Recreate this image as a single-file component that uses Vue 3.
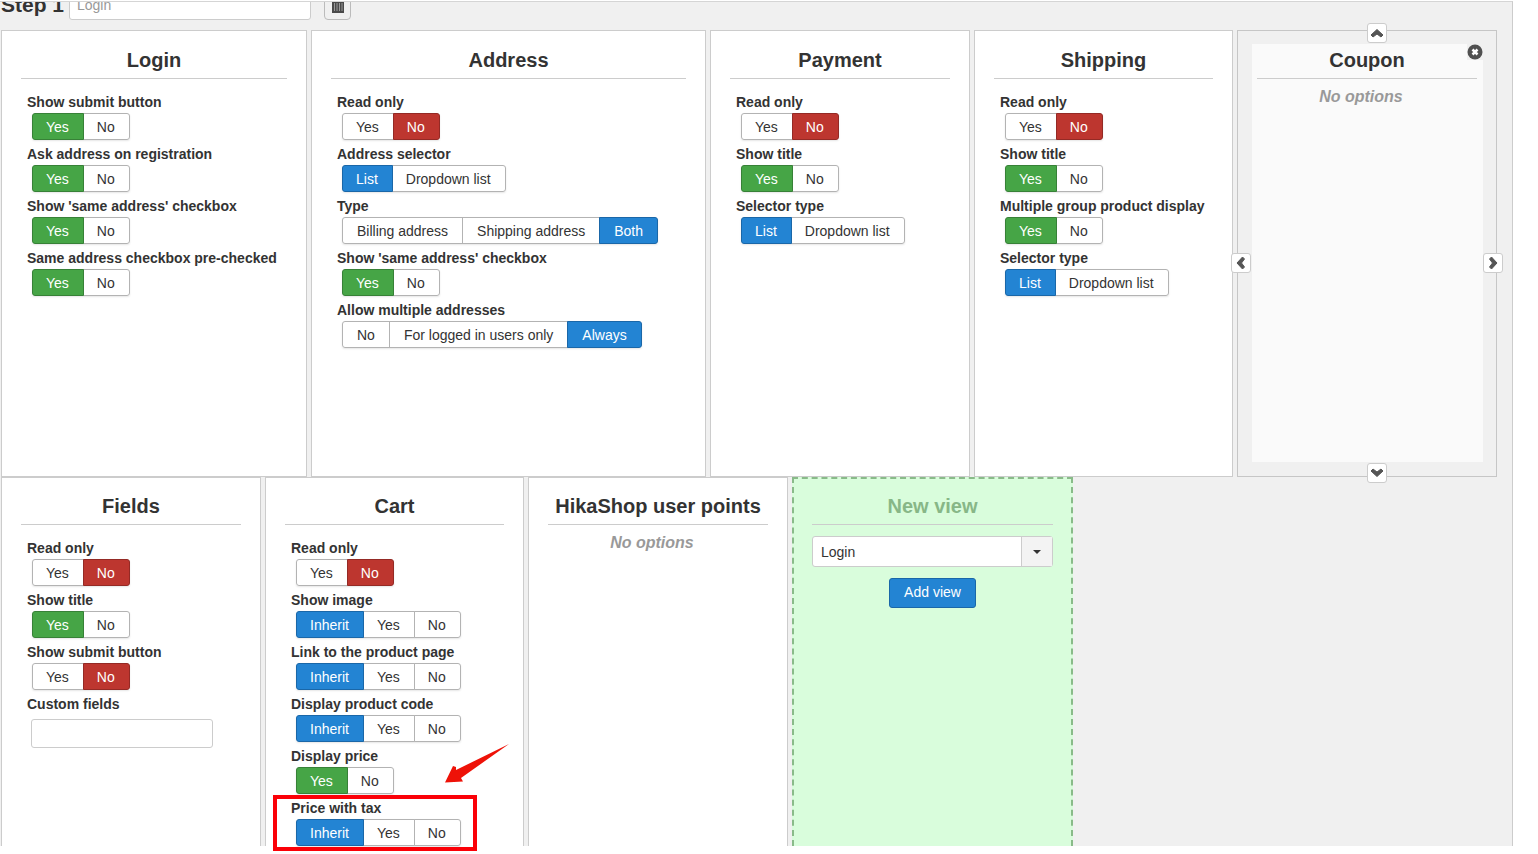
<script setup>
import { ref } from 'vue'

const yesNo = (label, value, extra = {}) => ({ label, options: ['Yes', 'No'], value: ref(value), ...extra })
const choice = (label, options, value, extra = {}) => ({ label, options, value: ref(value), neutral: true, ...extra })

const listOptions = ['List', 'Dropdown list']
const inheritOptions = ['Inherit', 'Yes', 'No']

const topViews = [
  {
    title: 'Login',
    fields: [
      yesNo('Show submit button', 'Yes'),
      yesNo('Ask address on registration', 'Yes'),
      yesNo("Show 'same address' checkbox", 'Yes'),
      yesNo('Same address checkbox pre-checked', 'Yes'),
    ],
  },
  {
    title: 'Address',
    fields: [
      yesNo('Read only', 'No'),
      choice('Address selector', listOptions, 'List'),
      choice('Type', ['Billing address', 'Shipping address', 'Both'], 'Both', { wide: true }),
      yesNo("Show 'same address' checkbox", 'Yes'),
      choice('Allow multiple addresses', ['No', 'For logged in users only', 'Always'], 'Always', { wide: true }),
    ],
  },
  {
    title: 'Payment',
    fields: [
      yesNo('Read only', 'No'),
      yesNo('Show title', 'Yes'),
      choice('Selector type', listOptions, 'List'),
    ],
  },
  {
    title: 'Shipping',
    fields: [
      yesNo('Read only', 'No'),
      yesNo('Show title', 'Yes'),
      yesNo('Multiple group product display', 'Yes'),
      choice('Selector type', listOptions, 'List'),
    ],
  },
  { title: 'Coupon', fields: [], active: true },
]

const bottomViews = [
  {
    title: 'Fields',
    fields: [
      yesNo('Read only', 'No'),
      yesNo('Show title', 'Yes'),
      yesNo('Show submit button', 'No'),
      { label: 'Custom fields', text: ref('') },
    ],
  },
  {
    title: 'Cart',
    fields: [
      yesNo('Read only', 'No'),
      choice('Show image', inheritOptions, 'Inherit'),
      choice('Link to the product page', inheritOptions, 'Inherit'),
      choice('Display product code', inheritOptions, 'Inherit'),
      yesNo('Display price', 'Yes', { arrow: true }),
      choice('Price with tax', inheritOptions, 'Inherit', { marked: true }),
    ],
  },
  { title: 'HikaShop user points', fields: [] },
]

const rows = [
  { name: 'top', views: topViews },
  { name: 'bottom', views: bottomViews, creator: true },
]

const directions = ['up', 'right', 'down', 'left']
const chevrons = {
  up: 'M8 4.500 14 10l-2 2-4-3-4 3-2-2z',
  down: 'M8 11.500 14 6l-2-2-4 3-4-3-2 2z',
  left: 'M4 8 9.500 2l2 2-3 4 3 4-2 2z',
  right: 'M12 8 6.500 2l-2 2 3 4-3 4 2 2z',
}

const stepName = ref('')
const newView = ref('Login')

function tone(field, option) {
  if (field.value.value !== option) return ''
  if (field.neutral) return 'primary'
  return option === 'Yes' ? 'success' : 'danger'
}
</script>

<template>
  <main class="page">
    <section class="board">
      <header class="step">
        <label class="step-title" for="step-name">Step 1</label>
        <input id="step-name" v-model="stepName" class="text-input step-name" type="text" placeholder="Login">
        <button class="trash" type="button" aria-label="Delete step">
          <svg viewBox="0 0 12 14" width="12" height="14" aria-hidden="true">
            <path d="M0 0h12v13H0z" fill="#4a4a4a" />
            <path d="M2.500 3v8M5 3v8M7.500 3v8M10 3v8" stroke="#999" stroke-width="1" />
          </svg>
        </button>
      </header>

      <div v-for="row in rows" :key="row.name" class="row" :class="row.name">
        <article v-for="view in row.views" :key="view.title" class="view" :class="{ active: view.active }">
          <div class="view-body">
            <h2>{{ view.title }}</h2>
            <div v-if="view.fields.length" class="fields">
              <div v-for="(field, index) in view.fields" :key="field.label" class="field" :class="{ marked: field.marked }">
                <template v-if="field.text">
                  <label class="field-label" :for="`${view.title}-${index}`">{{ field.label }}</label>
                  <input :id="`${view.title}-${index}`" v-model="field.text.value" class="text-input custom" type="text">
                </template>
                <template v-else>
                  <span :id="`${view.title}-${index}`" class="field-label">{{ field.label }}</span>
                  <div class="group" :class="{ wide: field.wide }" role="group" :aria-labelledby="`${view.title}-${index}`">
                    <button
                      v-for="option in field.options"
                      :key="option"
                      type="button"
                      :class="tone(field, option)"
                      :aria-pressed="field.value.value === option"
                      @click="field.value.value = option"
                    >{{ option }}</button>
                  </div>
                </template>
                <svg v-if="field.arrow" class="arrow" viewBox="0 0 66 42" width="66" height="42" aria-hidden="true">
                  <path d="M64 1 16 35l2 3.500L0 39.500 8 23l3 1v3z" fill="#ee1208" />
                </svg>
              </div>
            </div>
            <p v-else class="none">No options</p>
          </div>
          <template v-if="view.active">
            <button v-for="side in directions" :key="side" class="move" :class="side" type="button" :aria-label="`Move ${side}`">
              <svg viewBox="0 0 16 16" width="16" height="16" aria-hidden="true">
                <path :d="chevrons[side]" fill="#555" stroke="#555" stroke-width="1" stroke-linejoin="round" />
              </svg>
            </button>
            <button class="close" type="button" aria-label="Remove view">
              <svg viewBox="0 0 16 16" width="16" height="16" aria-hidden="true">
                <circle cx="8" cy="8" r="7.500" fill="#505050" />
                <path d="m5.500 5.500 5 5m0-5-5 5" stroke="#fff" stroke-width="2.500" />
              </svg>
            </button>
          </template>
        </article>

        <form v-if="row.creator" class="view creator" @submit.prevent>
          <h2><label for="new-view">New view</label></h2>
          <div class="select">
            <select id="new-view" v-model="newView">
              <option v-for="view in topViews" :key="view.title">{{ view.title }}</option>
            </select>
            <span class="caret" aria-hidden="true"></span>
          </div>
          <button class="add" type="submit">Add view</button>
        </form>
      </div>
    </section>
  </main>
</template>

<style>
body {
  background: #fff;
}
</style>

<style scoped>
.page,
.page * {
  box-sizing: border-box;
}

.page {
  padding: 1px 25px 8px 0;
  font-family: "Liberation Sans", Arial, sans-serif;
  font-size: 14px;
  line-height: 20px;
  color: #333;
}

button,
input,
select {
  font: inherit;
  color: inherit;
}

button {
  padding: 0;
  cursor: pointer;
}

.board {
  padding: 0 15px 0 1px;
  border-top: 1px solid #d5d5d5;
  border-right: 1px solid #ccc;
  background: #f0f0f0;
}

.step {
  display: flex;
  align-items: flex-end;
  height: 28px;
  padding-bottom: 10px;
  overflow: hidden;
}

.step-title {
  width: 68px;
  flex: none;
  padding-bottom: 1px;
  font-size: 21px;
  font-weight: bold;
  line-height: 28px;
  white-space: nowrap;
}

.text-input {
  height: 29px;
  padding: 0 7px;
  border: 1px solid #ccc;
  border-radius: 3px;
  background: #fff;
}

.step-name {
  width: 242px;
  padding-bottom: 2px;
}

.step-name::placeholder {
  color: #999;
}

.trash {
  display: flex;
  align-items: center;
  justify-content: center;
  width: 27px;
  height: 27px;
  margin-left: 13px;
  border: 1px solid #bbb;
  border-radius: 4px;
  background: #f0f0f0;
}

.row {
  display: grid;
  gap: 4px;
}

.top {
  grid-template-columns: 306fr 395fr 260fr 259fr 260fr;
}

.bottom {
  grid-template-columns: 260fr 259fr 260fr 281fr 420fr;
}

.view {
  position: relative;
  min-width: 0;
  padding: 13px 19px;
  border: 1px solid #ccc;
  background: #fff;
}

.top .view {
  min-height: 447px;
}

.bottom .view {
  min-height: 369px;
  padding-top: 12px;
  padding-bottom: 0;
  border-bottom: 0;
}

h2 {
  margin: 0;
  padding-bottom: 2px;
  border-bottom: 1px solid #ccc;
  font-size: 20px;
  line-height: 32px;
  text-align: center;
  white-space: nowrap;
}

.fields {
  padding: 13px 6px 0;
}

.field {
  position: relative;
  margin-bottom: 4px;
  white-space: nowrap;
}

.bottom .field:last-child {
  margin-bottom: 0;
}

.field-label {
  display: block;
  font-weight: bold;
}

.group {
  display: flex;
  width: max-content;
  margin: 1px 0 0 5px;
  border-radius: 3px;
  box-shadow: 0 1px 2px rgba(0, 0, 0, 0.1);
}

.group button {
  height: 27px;
  margin-left: -1px;
  padding: 0 14px 0 13px;
  border: 1px solid #b3b3b3;
  background: #fff;
}

.wide button {
  padding-left: 14px;
}

.group button:first-child {
  margin-left: 0;
  border-radius: 3px 0 0 3px;
}

.group button:last-child {
  border-radius: 0 3px 3px 0;
}

.group .success,
.group .danger,
.group .primary {
  position: relative;
  color: #fff;
}

.group .success {
  border-color: #378137;
  background: #46a546;
}

.group .danger {
  border-color: #942a25;
  background: #bd362f;
}

.group .primary,
.add {
  border-color: #1a67a8;
  background: #2384d3;
}

.custom {
  width: 182px;
  margin: 5px 0 0 4px;
}

.marked::after {
  content: "";
  position: absolute;
  top: -3px;
  left: -18px;
  box-sizing: border-box;
  width: 204px;
  height: 56px;
  border: 4px solid #fb0007;
  pointer-events: none;
}

.arrow {
  position: absolute;
  top: -3px;
  left: 154px;
}

.none {
  margin: 8px 12px 0 0;
  color: #999;
  font-size: 16px;
  font-style: italic;
  font-weight: bold;
  text-align: center;
}

.active {
  display: flex;
  padding: 13px 13px 14px 14px;
  border-color: #c6c6c6;
  background: #f0f0f0;
}

.active .view-body {
  flex: 1;
  padding: 0 6px 0 5px;
  background: #fafafa;
}

.move {
  position: absolute;
  display: flex;
  align-items: center;
  justify-content: center;
  width: 20px;
  height: 20px;
  border: 1px solid #ccc;
  border-radius: 3px;
  background: #fff;
}

.up,
.down {
  left: 50%;
}

.up {
  top: -8px;
}

.down {
  bottom: -7px;
}

.left,
.right {
  top: 222px;
}

.left {
  left: -7px;
}

.right {
  right: -7px;
}

.close {
  position: absolute;
  top: 13px;
  right: 13px;
  width: 16px;
  height: 16px;
  border: 0;
  background: #f0f0f0;
}

.close svg {
  display: block;
}

.creator {
  padding-right: 18px;
  padding-left: 18px;
  border: 2px dashed #89bb89;
  background: #d9fddc;
  text-align: center;
}

.bottom .creator {
  padding-top: 11px;
}

.creator h2 {
  color: #87b787;
}

.select {
  position: relative;
  margin-top: 11px;
}

.select select {
  display: block;
  width: 100%;
  height: 31px;
  padding: 0 40px 0 8px;
  border: 1px solid #ccc;
  border-radius: 3px;
  appearance: none;
  background: #fff;
}

.caret {
  position: absolute;
  top: 1px;
  right: 1px;
  bottom: 1px;
  display: flex;
  align-items: center;
  justify-content: center;
  width: 31px;
  border-left: 1px solid #ccc;
  background: #f3f3f3;
  pointer-events: none;
}

.caret::after {
  content: "";
  border: 4px solid transparent;
  border-top-color: #333;
  border-bottom: 0;
}

.add {
  height: 30px;
  margin-top: 11px;
  padding: 0 14px 2px;
  border: 1px solid #1a67a8;
  border-radius: 3px;
  color: #fff;
}
</style>
